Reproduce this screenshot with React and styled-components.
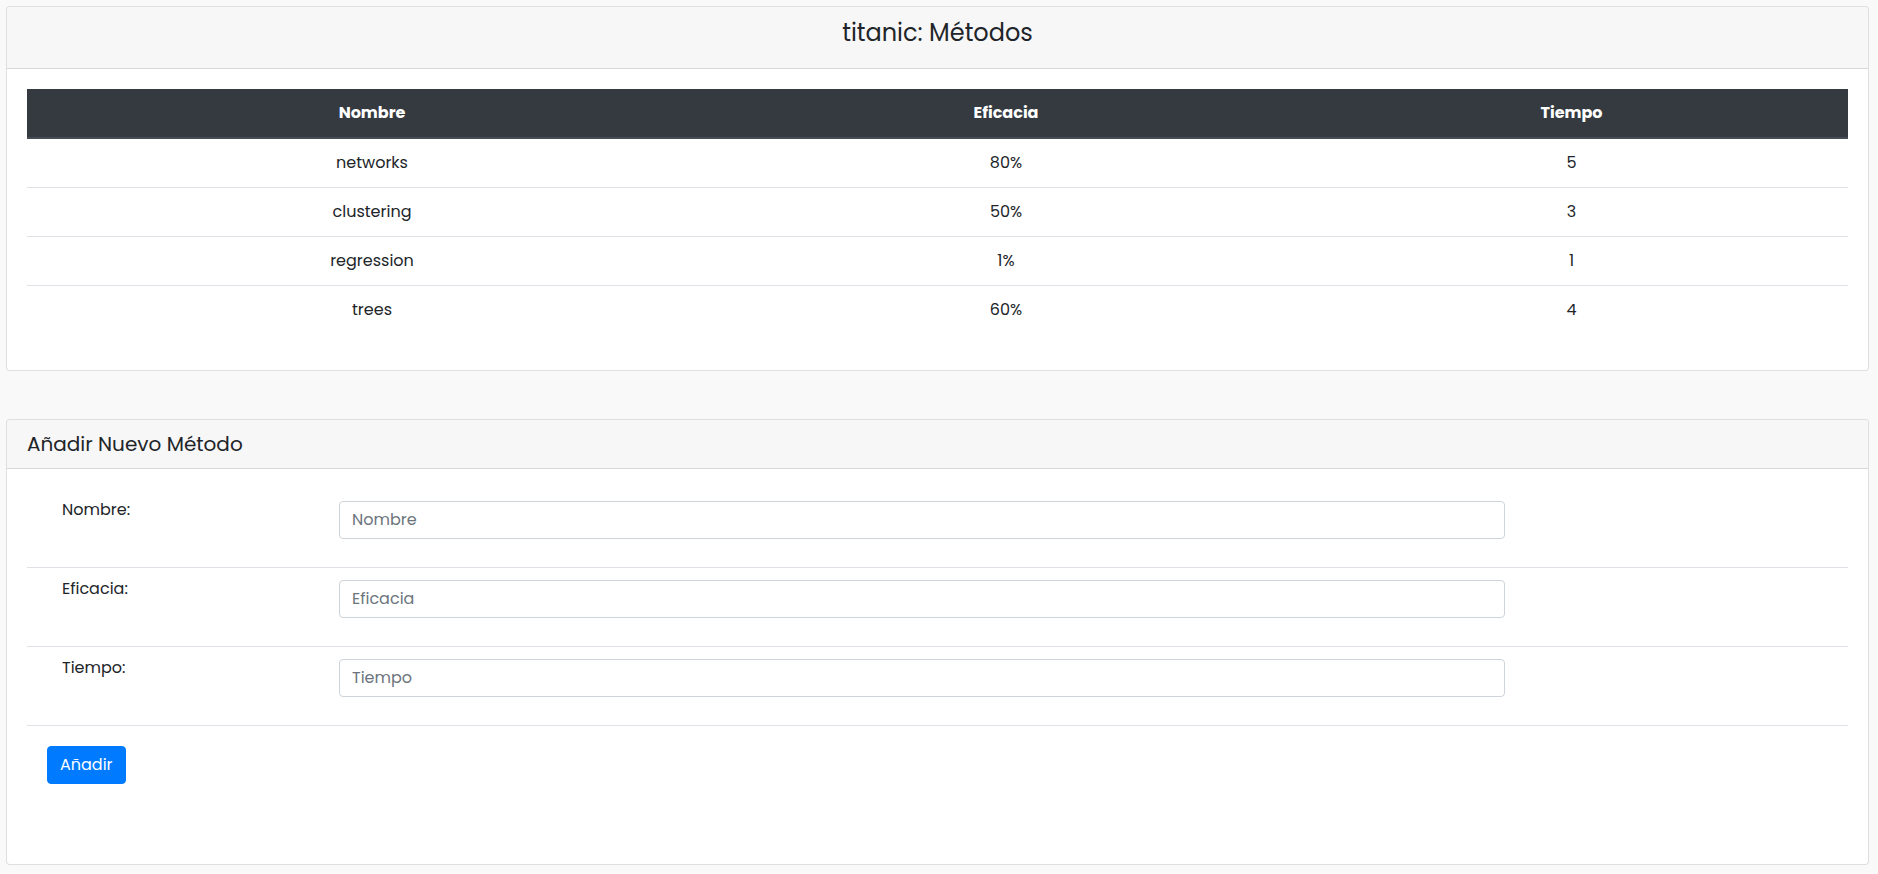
import React from 'react'
import styled, { createGlobalStyle } from 'styled-components'

const GlobalStyle = createGlobalStyle`
  * {
    box-sizing: border-box;
  }
  body {
    margin: 0;
    background: #f9f9f9;
    font-family: "Poppins", "Inter", "Noto Sans", sans-serif;
    font-size: 16px;
    line-height: 1.5;
    color: #212529;
  }
`

const Page = styled.div`
  display: flex;
  flex-direction: column;
  gap: 48px;
  padding: 6px 9px 10px 6px;
`

const Card = styled.section`
  background: #fff;
  border: 1px solid rgba(0, 0, 0, 0.125);
  border-radius: 4px;
`

const CardHeader = styled.div`
  background: #f7f7f7;
  border-bottom: 1px solid rgba(0, 0, 0, 0.125);
  border-radius: 3px 3px 0 0;
  padding: 12px 20px;
  text-align: ${(p) => (p.center ? 'center' : 'left')};
`

const MainTitle = styled.h4`
  margin: 0 0 8px;
  font-size: 24px;
  font-weight: 400;
  line-height: 1.2;
`

const SubTitle = styled.h5`
  margin: 0;
  font-size: 20px;
  font-weight: 400;
  line-height: 1.2;
`

const CardBody = styled.div`
  padding: 20px;
`

const Table = styled.table`
  width: 100%;
  border-collapse: collapse;
  margin-bottom: 16px;
  table-layout: fixed;
`

const Th = styled.th`
  background: #343a40;
  color: #fff;
  font-weight: 700;
  padding: 12px;
  text-align: center;
  border-bottom: 2px solid #454d55;
  width: ${(p) => p.width}px;
`

const Td = styled.td`
  padding: 12px;
  text-align: center;
  border-top: ${(p) => (p.first ? 'none' : '1px solid #dee2e6')};
`

const Form = styled.form`
  display: flex;
  flex-direction: column;
`

const FormRow = styled.div`
  display: grid;
  grid-template-columns: 277px 1166px;
  padding: 12px 0 28px 35px;
  border-bottom: 1px solid #dee2e6;
`

const Label = styled.label`
  margin-top: -3px;
  font-size: 16px;
  line-height: 24px;
`

const Input = styled.input`
  height: 38px;
  padding: 6px 12px;
  border: 1px solid #ced4da;
  border-radius: 4px;
  font-family: inherit;
  font-size: 16px;
  color: #495057;
  background: #fff;
  outline: none;
  &::placeholder {
    color: #6c757d;
  }
`

const Actions = styled.div`
  padding: 20px 0 60px 20px;
`

const Button = styled.button`
  height: 38px;
  padding: 6px 12px;
  border: 1px solid #007bff;
  border-radius: 4px;
  background: #007bff;
  color: #fff;
  font-family: inherit;
  font-size: 16px;
  line-height: 24px;
  cursor: pointer;
`

const metodos = [
  { nombre: 'networks', eficacia: '80%', tiempo: 5 },
  { nombre: 'clustering', eficacia: '50%', tiempo: 3 },
  { nombre: 'regression', eficacia: '1%', tiempo: 1 },
  { nombre: 'trees', eficacia: '60%', tiempo: 4 },
]

const campos = ['Nombre', 'Eficacia', 'Tiempo']

export default function App() {
  return (
    <>
      <GlobalStyle />
      <Page>
        <Card>
          <CardHeader center>
            <MainTitle>titanic: Métodos</MainTitle>
          </CardHeader>
          <CardBody>
            <Table>
              <thead>
                <tr>
                  <Th width={690}>Nombre</Th>
                  <Th width={578}>Eficacia</Th>
                  <Th width={553}>Tiempo</Th>
                </tr>
              </thead>
              <tbody>
                {metodos.map((m, i) => (
                  <tr key={m.nombre}>
                    <Td first={i === 0}>{m.nombre}</Td>
                    <Td first={i === 0}>{m.eficacia}</Td>
                    <Td first={i === 0}>{m.tiempo}</Td>
                  </tr>
                ))}
              </tbody>
            </Table>
          </CardBody>
        </Card>

        <Card>
          <CardHeader>
            <SubTitle>Añadir Nuevo Método</SubTitle>
          </CardHeader>
          <CardBody>
            <Form onSubmit={(e) => e.preventDefault()}>
              {campos.map((c) => (
                <FormRow key={c}>
                  <Label htmlFor={c}>{c}:</Label>
                  <Input id={c} type="text" placeholder={c} />
                </FormRow>
              ))}
              <Actions>
                <Button type="submit">Añadir</Button>
              </Actions>
            </Form>
          </CardBody>
        </Card>
      </Page>
    </>
  )
}
